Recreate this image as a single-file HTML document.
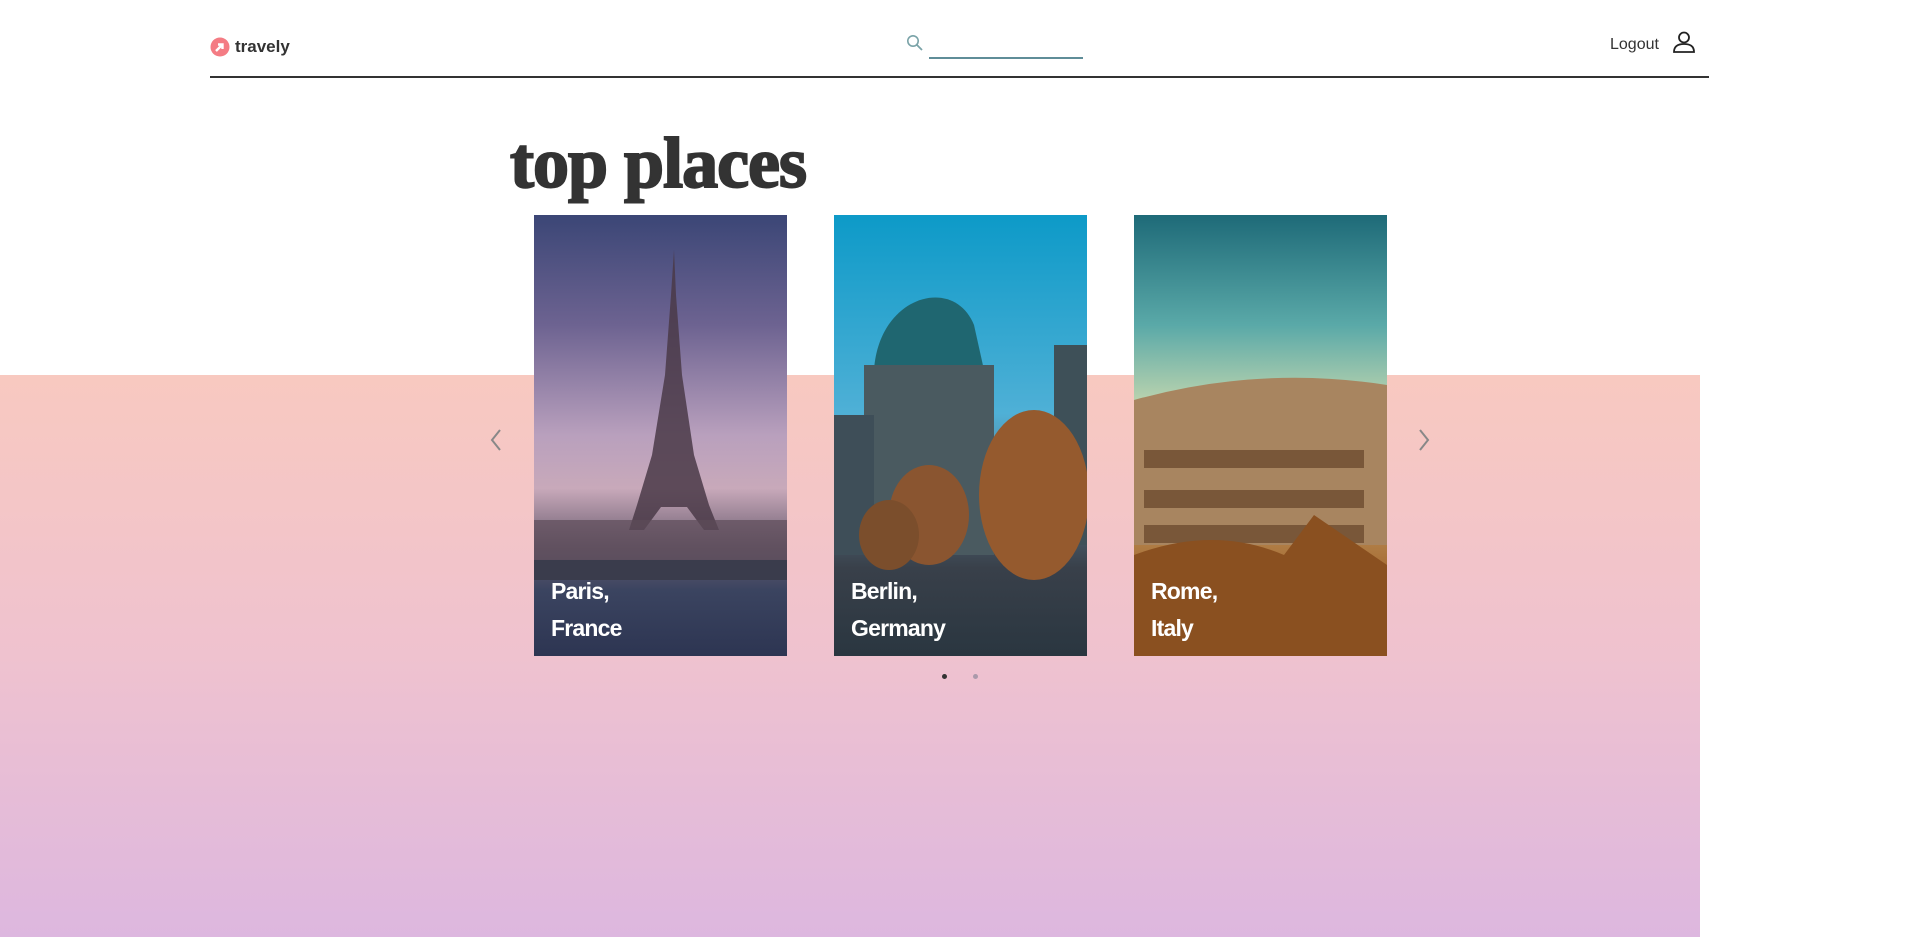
<!DOCTYPE html>
<html><head><meta charset="utf-8"><style>
*{margin:0;padding:0;box-sizing:border-box}
body{width:1920px;height:937px;overflow:hidden;background:#fff;font-family:"Liberation Sans",sans-serif;position:relative}
.band{position:absolute;left:0;top:375px;width:1700px;height:562px;background:linear-gradient(#f8c9c0,#efc2cf 50%,#ddb7df)}
.hline{position:absolute;left:210px;top:76px;width:1499px;height:2px;background:#333}
.logo{position:absolute;left:210px;top:37px;display:flex;align-items:center;font-weight:bold;font-size:17px;color:#333}
.title{position:absolute;left:510px;top:127px;font-family:"Liberation Serif",serif;font-weight:bold;font-size:72px;color:#333;letter-spacing:-1px;line-height:1;-webkit-text-stroke:2px #333}
.card{position:absolute;top:215px;width:253px;height:441px;overflow:hidden}
.card .lbl{position:absolute;left:17px;top:358px;color:#fff;font-weight:bold;font-size:23px;line-height:37px;letter-spacing:-0.8px}
.arrow{position:absolute;top:428px;width:14px;height:24px}
.dot{position:absolute;top:674px;width:5px;height:5px;border-radius:50%}
</style></head><body>
<div class="band"></div>
<div class="logo"><svg width="20" height="20" viewBox="0 0 20 20"><circle cx="10" cy="10" r="9.5" fill="#f47c84"/><path d="M6 14 L12 8 M8 7.5 H12.5 V12" stroke="#fff" stroke-width="2.4" fill="none"/></svg><span style="margin-left:5px">travely</span></div>
<svg style="position:absolute;left:906px;top:34px" width="18" height="18" viewBox="0 0 18 18"><circle cx="7" cy="7" r="5.2" stroke="#7aa3a8" stroke-width="1.6" fill="none"/><path d="M11 11 L16 16" stroke="#7aa3a8" stroke-width="1.8"/></svg>
<div style="position:absolute;left:929px;top:57px;width:154px;height:2px;background:#5f8d98"></div>
<div style="position:absolute;left:1610px;top:36px;font-size:16px;color:#333">Logout</div>
<svg style="position:absolute;left:1672px;top:30px" width="24" height="24" viewBox="0 0 24 24"><circle cx="12" cy="7.5" r="5" stroke="#222" stroke-width="1.8" fill="none"/><path d="M2 22 C2 16 6 14 12 14 C18 14 22 16 22 22 Z" stroke="#222" stroke-width="1.8" fill="none"/></svg>
<div class="hline"></div>
<div class="title">top places</div>

<div class="card" style="left:534px;background:linear-gradient(#3b4676 0%,#6d6391 25%,#b9a0bd 50%,#c8a9ba 62%,#6d5f72 75%,#3b4460 85%,#2d3552 100%)">
<svg width="253" height="441" style="position:absolute;left:0;top:0"><path d="M140 35 L137 80 L131 160 L118 240 L103 290 L95 315 L110 315 L127 292 L153 292 L170 315 L185 315 L175 290 L160 240 L148 160 L142 80 Z" fill="#4a3a48" opacity=".85"/><rect x="0" y="305" width="253" height="40" fill="#5d4c58" opacity=".7"/><rect x="0" y="345" width="253" height="20" fill="#3a3c4c"/></svg>
<div class="lbl">Paris,<br>France</div></div>

<div class="card" style="left:834px;background:linear-gradient(#0d9ac8 0%,#4fb0d6 45%,#5a7e90 60%,#39404a 80%,#2a3640 100%)">
<svg width="253" height="441" style="position:absolute;left:0;top:0"><path d="M40 155 C45 80 120 60 140 110 L150 155 Z" fill="#1f6670"/><rect x="30" y="150" width="130" height="190" fill="#4a5a60"/><rect x="0" y="200" width="40" height="140" fill="#3e4e58"/><rect x="220" y="130" width="33" height="200" fill="#3e5058"/><ellipse cx="95" cy="300" rx="40" ry="50" fill="#8a5530"/><ellipse cx="200" cy="280" rx="55" ry="85" fill="#955a2e"/><ellipse cx="55" cy="320" rx="30" ry="35" fill="#7b4e2c"/></svg>
<div class="lbl">Berlin,<br>Germany</div></div>

<div class="card" style="left:1134px;background:linear-gradient(#1e6a78 0%,#5aa9a8 25%,#b8d2ae 42%,#d4c08a 55%,#b88a52 70%,#9e6028 85%,#7a4018 100%)">
<svg width="253" height="441" style="position:absolute;left:0;top:0"><path d="M0 185 Q126 150 253 170 L253 330 L0 330 Z" fill="#a88560"/><g fill="#5a3a20" opacity=".6"><rect x="10" y="235" width="220" height="18"/><rect x="10" y="275" width="220" height="18"/><rect x="10" y="310" width="220" height="18"/></g><path d="M0 340 Q80 310 150 340 L180 300 L253 350 L253 441 L0 441 Z" fill="#8a5020"/></svg>
<div class="lbl">Rome,<br>Italy</div></div>

<svg class="arrow" style="left:489px" viewBox="0 0 14 24"><path d="M11 2 L3 12 L11 22" stroke="#888" stroke-width="2" fill="none"/></svg>
<svg class="arrow" style="left:1417px" viewBox="0 0 14 24"><path d="M3 2 L11 12 L3 22" stroke="#888" stroke-width="2" fill="none"/></svg>
<div class="dot" style="left:942px;background:#333"></div>
<div class="dot" style="left:973px;background:#aa99aa"></div>
</body></html>
